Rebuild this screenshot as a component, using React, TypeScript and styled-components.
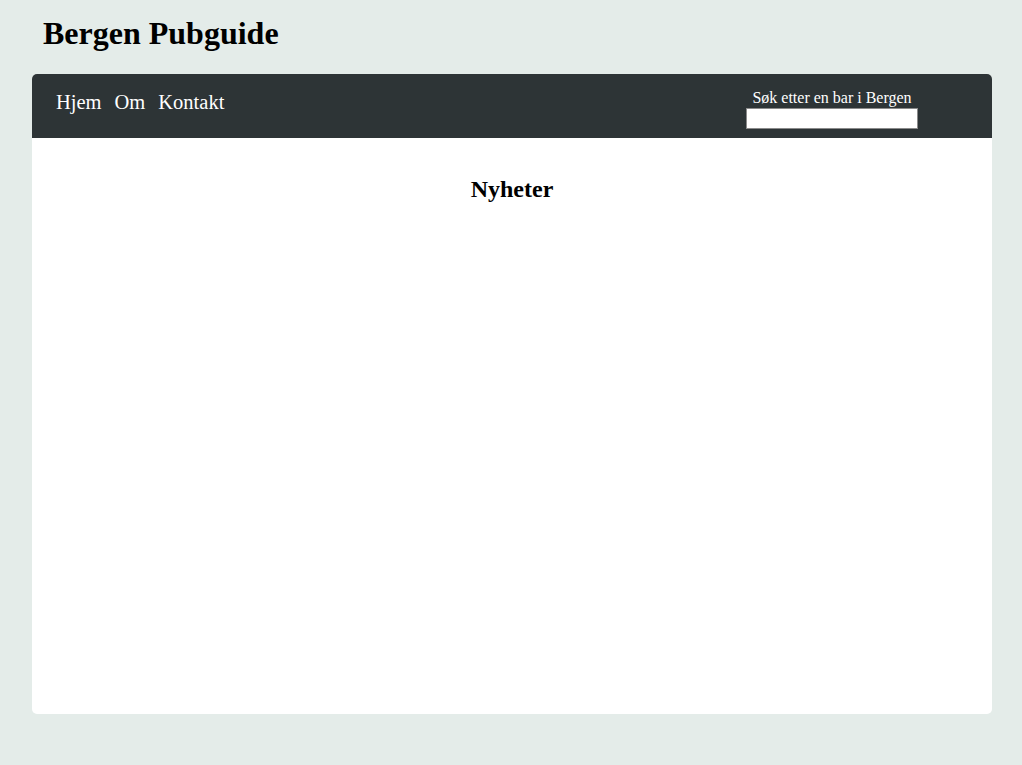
import React from "react";
import styled, { createGlobalStyle } from "styled-components";

const GlobalStyle = createGlobalStyle`
  html, body {
    margin: 0;
    padding: 0;
    background: #e4ece9;
    font-family: "Liberation Serif", "Times New Roman", serif;
  }
`;

const Page = styled.div`
  padding: 0 30px 0 32px;
`;

const Title = styled.h1`
  margin: 15px 0 22px 0;
  padding-left: 11px;
  font-size: 32px;
  font-weight: bold;
  color: #000;
  line-height: 37px;
`;

const Container = styled.div`
  width: 960px;
  height: 640px;
  background: #fff;
  border-radius: 5px;
  overflow: hidden;
  display: flex;
  flex-direction: column;
`;

const NavBar = styled.nav`
  height: 64px;
  box-sizing: border-box;
  background: #2d3436;
  display: flex;
  justify-content: space-between;
  align-items: flex-start;
  padding: 0 74px 0 24px;
`;

const Links = styled.div`
  display: flex;
  gap: 13px;
  margin-top: 17px;
`;

const NavLink = styled.a`
  color: #fff;
  font-size: 20.5px;
  line-height: 23px;
  text-decoration: none;
  cursor: pointer;
`;

const Search = styled.div`
  width: 172px;
  margin-top: 15px;
  display: flex;
  flex-direction: column;
  align-items: center;
`;

const SearchLabel = styled.label`
  color: #fff;
  font-size: 16px;
  line-height: 18px;
  white-space: nowrap;
`;

const SearchInput = styled.input`
  width: 172px;
  height: 21px;
  box-sizing: border-box;
  border: 1px solid #8a8a8a;
  background: #fff;
  padding: 1px 2px;
  margin: 1px 0 0 0;
  outline: none;
`;

const Main = styled.main`
  padding-top: 37px;
  text-align: center;
`;

const Heading = styled.h2`
  margin: 0;
  font-size: 24px;
  line-height: 28px;
  font-weight: bold;
  color: #000;
`;

export default function App() {
  return (
    <>
      <GlobalStyle />
      <Page>
        <Title>Bergen Pubguide</Title>
        <Container>
          <NavBar>
            <Links>
              <NavLink>Hjem</NavLink>
              <NavLink>Om</NavLink>
              <NavLink>Kontakt</NavLink>
            </Links>
            <Search>
              <SearchLabel htmlFor="sok">Søk etter en bar i Bergen</SearchLabel>
              <SearchInput id="sok" type="text" />
            </Search>
          </NavBar>
          <Main>
            <Heading>Nyheter</Heading>
          </Main>
        </Container>
      </Page>
    </>
  );
}
